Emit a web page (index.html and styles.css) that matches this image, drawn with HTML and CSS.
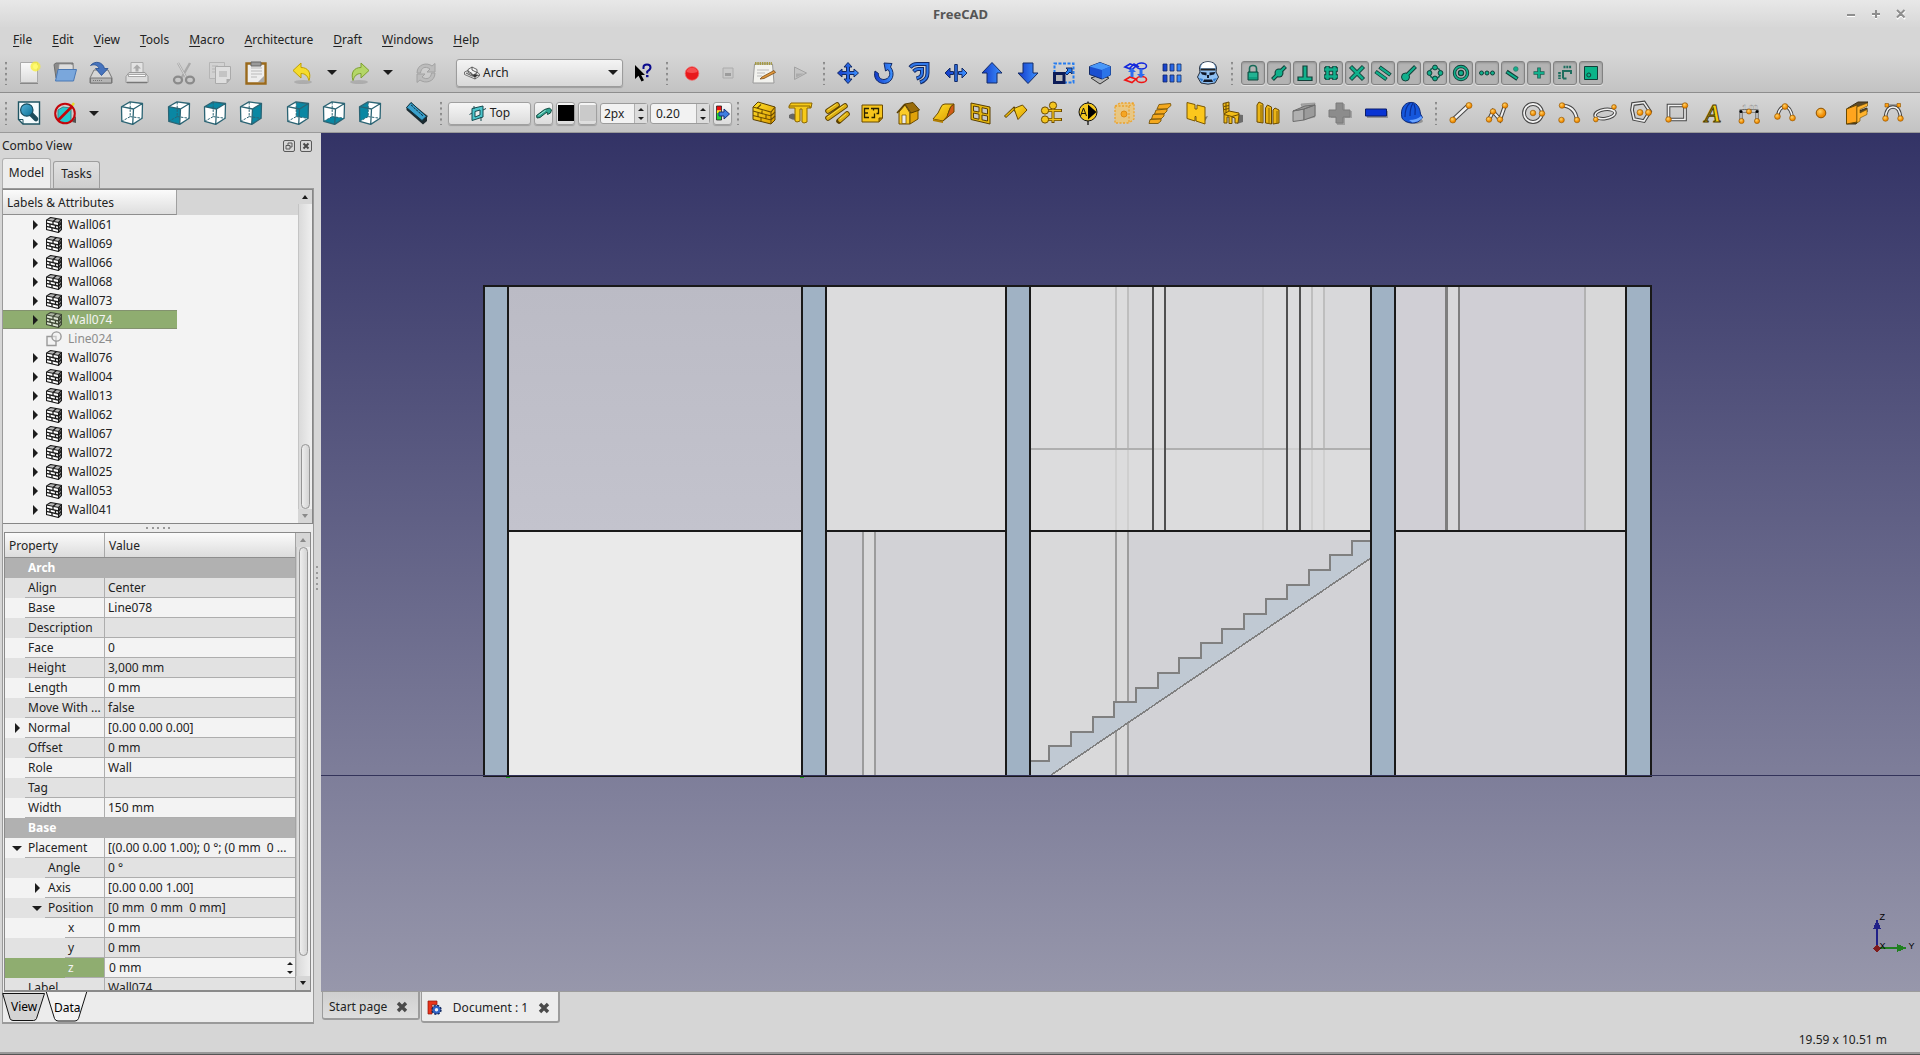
FILE: index.html
```html
<!DOCTYPE html>
<html lang="en">
<head>
<meta charset="utf-8">
<title>FreeCAD</title>
<link rel="stylesheet" href="styles.css">
</head>
<body>
<svg class="defs" width="0" height="0" aria-hidden="true">
  <defs>
    <linearGradient id="gb" x1="0" y1="0" x2="1" y2="0"><stop offset="0" stop-color="#1238c8"/><stop offset="1" stop-color="#3d93ff"/></linearGradient>
    <linearGradient id="gy" x1="0" y1="0" x2="1" y2="1"><stop offset="0" stop-color="#ffe12a"/><stop offset="1" stop-color="#dc9a00"/></linearGradient>
    <linearGradient id="gw" x1="0" y1="0" x2="0" y2="1"><stop offset="0" stop-color="#fafafa"/><stop offset="1" stop-color="#dcdcdc"/></linearGradient>
    <linearGradient id="gt" x1="0" y1="0" x2="1" y2="1"><stop offset="0" stop-color="#57b6dc"/><stop offset="1" stop-color="#0a6d92"/></linearGradient>
    <radialGradient id="go" cx=".4" cy=".35"><stop offset="0" stop-color="#ffd268"/><stop offset="1" stop-color="#f08a00"/></radialGradient>
    <linearGradient id="view" x1="0" y1="0" x2="0" y2="1"><stop offset="0" stop-color="#333366"/><stop offset="1" stop-color="#9797ab"/></linearGradient>
    <linearGradient id="roomA" x1="0" y1="0" x2="0" y2="1"><stop offset="0" stop-color="#bbbbc5"/><stop offset="1" stop-color="#c3c3cd"/></linearGradient>
  </defs>
  <symbol id="cube" viewBox="0 0 24 24">
    <path d="M10.2 1v14.6L1.8 20.3M10.2 15.6l12 1.7" fill="none" stroke="#2b6474" stroke-width="1" stroke-dasharray="2.5 1.2"/>
    <path d="M1.5 5.7 10 .9l12.5 1.6-.4 14.8-9.4 6.1-10.9-3.1zM1.5 5.7l12 2.3 9-5.5M13.5 8l-.8 15.4" fill="none" stroke="#2b6474" stroke-width="1.3" stroke-linejoin="round"/>
  </symbol>
  <symbol id="cubebg" viewBox="0 0 24 24"><path d="M1.5 5.7 10 .9l12.5 1.6-.4 14.8-9.4 6.1-10.9-3.1z" fill="#fff"/></symbol>
  <symbol id="wall" viewBox="0 0 16 16">
    <path d="M.5 3 4.500.5 15.500 2.500v10L12.500 15.500.5 12.500z" fill="#fff"/>
    <path d="M.5 3 4.500.5l11 2-3 3z" fill="#bbb"/>
    <path d="M12.500 5.500l3-3v10l-3 3z" fill="#999"/>
    <path d="M.5 3v9.500l12 3 3-3v-10l-11-2zM.5 3l12 2.500 3-3M12.500 5.500v10" fill="none" stroke="#1a1a1a" stroke-width="1.100"/>
    <path d="M.5 6.200l12 2.800 3-3M.5 9.300l12 2.900 3-3" fill="none" stroke="#1a1a1a" stroke-width="1.300"/>
    <path d="M7 4.400v3.300M4 7v3.300M9.500 8.300v3.300M6 10.700V14M7 4.400l3.500-2.800M14 4.500v3.200" fill="none" stroke="#1a1a1a" stroke-width="1.300"/>
  </symbol>
  <symbol id="close" viewBox="0 0 12 12"><path d="M2 2l8 8M10 2l-8 8" stroke="#4a4a4a" stroke-width="3.4"/></symbol>
</svg>

<div class="app">
  <header class="titlebar">
    <span class="title">FreeCAD</span>
    <svg class="winbtns" width="64" height="14" viewBox="0 0 64 14"><g fill="none" stroke="#fff" stroke-width="2" transform="translate(0 1)"><path d="M2 8h8M27 7h8M31 3v8M52 3l8 8M60 3l-8 8"/></g><g fill="none" stroke="#8e8e8e" stroke-width="2"><path d="M2 8h8M27 7h8M31 3v8M52 3l7.5 7.5M59.500 3l-7.500 7.500"/></g></svg>
  </header>

  <nav class="menubar">
    <span><u>F</u>ile</span><span><u>E</u>dit</span><span><u>V</u>iew</span><span><u>T</u>ools</span><span><u>M</u>acro</span><span><u>A</u>rchitecture</span><span><u>D</u>raft</span><span><u>W</u>indows</span><span><u>H</u>elp</span>
  </nav>

  <div class="toolbar">
    <i class="grip"></i>
    <svg class="ic" viewBox="0 0 24 24"><path d="M3.500 1.500h17v20h-17z" fill="url(#gw)" stroke="#aaa"/><path d="M3 22.500h18" stroke="#888"/><circle cx="18.500" cy="5.500" r="5" fill="#f8ef30" opacity=".75"/><circle cx="18.500" cy="5.500" r="2.500" fill="#fffb70"/></svg>
    <svg class="ic" viewBox="0 0 24 24"><path d="M1 3.500 3 2h17v15H3z" fill="#8c8c8c" stroke="#6e6e6e"/><path d="M6 3h12l2 1v8H5z" fill="#ddd" stroke="#888" stroke-width=".7"/><path d="M5 8.500h18.500l-3 11.500H2.500z" fill="#7aa7dc" stroke="#4a78b4"/></svg>
    <svg class="ic" viewBox="0 0 24 24"><path d="M5 9h14l4 8v5H1v-5z" fill="#d6d6d6" stroke="#777"/><path d="M1.500 17h21v5h-21z" fill="#b4b4b4" stroke="#777"/><path d="M4 19.500h9" stroke="#777" stroke-dasharray="1 1"/><path d="M1.500 4.500C6-1 14 1 15.500 7.500h3.500l-6.500 7-6-7H10C9 4 5 3 1.500 4.500z" fill="#4673bd" stroke="#234d8f" stroke-width=".8"/></svg>
    <svg class="ic" viewBox="0 0 24 24"><path d="M6 1.500h12v12H6z" fill="#e3e3e3" stroke="#aaa"/><path d="M12 3.500l4 4h-2.500v3h-3v-3H8z" fill="#aaa"/><path d="M4 11.500h16l3 4v6H1v-6z" fill="#ddd" stroke="#999"/><path d="M3.500 15.500h17v-2h-17z" fill="#fff" stroke="#888" stroke-width=".7"/><path d="M2 21.500h20" stroke="#777" stroke-width="1.500"/></svg>
    <i class="gap"></i>
    <svg class="ic" viewBox="0 0 24 24"><path d="M6 2l8.500 15M18 2 9.500 17" stroke="#a9a9a9" stroke-width="2.400"/><path d="M6 2l8.500 15" stroke="#d5d5d5"/><ellipse cx="6" cy="19" rx="4" ry="3.400" fill="none" stroke="#8b8b8b" stroke-width="2.300"/><ellipse cx="18" cy="19" rx="4" ry="3.400" fill="none" stroke="#8b8b8b" stroke-width="2.300"/></svg>
    <svg class="ic" viewBox="0 0 24 24"><path d="M1.500 1.500h15v16h-15z" fill="#d2d2d2" stroke="#b5b5b5"/><path d="M4 5h6M4 8h3M4 11h3" stroke="#b5b5b5"/><path d="M7.500 5.500h15V18l-4 4.500h-11z" fill="#dedede" stroke="#aaa"/><path d="M11 10h8v6h-8z" fill="#c4c4c4"/><path d="M22.500 18l-4 4.500V18z" fill="#aaa"/></svg>
    <svg class="ic" viewBox="0 0 24 24"><path d="M2.500 2.500h19v20h-19z" fill="#eee" stroke="#9a6a1c" stroke-width="2.400"/><path d="M7 7h11M7 10h11M7 13h11M7 16h6" stroke="#ccc" stroke-width="1.500"/><path d="M7 1h10v4H7z" fill="#9a9a9a" stroke="#666"/><path d="M20 15v6h-6z" fill="#aaa"/></svg>
    <i class="gap"></i>
    <svg class="ic" viewBox="0 0 24 24"><ellipse cx="12" cy="21" rx="9" ry="2" fill="#0002"/><path d="M10 2v4.500c7 0 10.500 5 8 13-1.500-5-4-7-8-7V17L2 9.500z" fill="#f6dc2c" stroke="#c0a000"/></svg>
    <i class="drop dw1"></i>
    <svg class="ic" viewBox="0 0 24 24"><ellipse cx="11" cy="21" rx="9" ry="2" fill="#0002"/><path d="M13 2v4.500c-7 0-10.500 5-8 13 1.500-5 4-7 8-7V17l8-7.500z" fill="#b4d668" stroke="#7da02e"/></svg>
    <i class="drop dw2"></i>
    <i class="gap"></i>
    <svg class="ic" viewBox="0 0 24 24"><path d="M3 12C3 3 13 1 18 5l3-2.500V11h-8l3-3C11 4.500 7 7 6.500 12zM21 12c0 9-10 11-15 7l-3 2.500V13h8l-3 3c5 3.500 9 1 9.500-4z" fill="#bcbcbc" stroke="#a2a2a2"/></svg>
    <div class="combo"><svg width="16" height="14" viewBox="0 0 16 14"><path d="M.5 6 5 4v2l5-2 5.500 4v2L11 13 .5 8.500z" fill="#e6e6e6" stroke="#555" stroke-width=".8"/><path d="M4 3.500 8 1l5 2.500V7L9 9 4 6.500z" fill="#f5f5f5" stroke="#444" stroke-width=".8"/><path d="M8 1v3l5 2.500M4 5l4 2.500V9M2 7l6 3 3-1.500 4 1M11 10v3" fill="none" stroke="#333" stroke-width=".8"/><path d="M8 10l3-1.500 3 1-3 1.800z" fill="#333"/></svg><span>Arch</span><i class="tri"></i></div>
    <svg class="ic" viewBox="0 0 24 24"><path d="M4 4v14l3.500-3.200 3 5.700 2.500-1.200-2.800-5.300H14z" fill="#000"/><path d="M12.500 8V6q0-2.500 3.500-2.500T19.500 6.500q0 2-3.300 4V12.500" fill="none" stroke="#0a0a8c" stroke-width="2"/><path d="M15 14h2.500v2.200H15z" fill="#0a0a8c"/></svg>
    <i class="grip g13"></i>
    <svg class="ic" viewBox="0 0 24 24"><circle cx="12" cy="12.500" r="6.800" fill="#e8191c" stroke="#f06a6a" stroke-width=".8"/><path d="M6.500 11a5.700 5.700 0 0 1 11 0q-5.500 2-11 0z" fill="#ff6f6f" opacity=".6"/></svg>
    <svg class="ic" viewBox="0 0 24 24"><path d="M7 7h10v10H7z" fill="#c9c9c9" stroke="#acacac"/><path d="M9 12h6v3H9z" fill="#9c9c9c"/></svg>
    <svg class="ic" viewBox="0 0 24 24"><path d="M2.500 3h18l1.500 19H1z" fill="#f2f2ee" stroke="#999"/><path d="M3 2.500h17" stroke="#a59a43" stroke-width="3" stroke-dasharray="1.500 .8"/><path d="M5 9h12M5 12h8M5 15h5" stroke="#bbb"/><path d="M10 16l12-6.500 1.500 2L12 17.500 8 18z" fill="#e0973b" stroke="#7a4d18" stroke-width=".8"/></svg>
    <svg class="ic" viewBox="0 0 24 24"><path d="M6.500 6l12 6-12 6.500z" fill="#c4c4c4" stroke="#a2a2a2"/><path d="M8 12.500h8l-8 4z" fill="#ababab"/></svg>
    <i class="grip"></i>
    <svg class="ic" viewBox="0 0 24 24"><path d="M12 1.500l4 4.500h-2.500v4.500H18V8l4.500 4-4.500 4v-2.500h-4.500V18H16l-4 4.500L8 18h2.500v-4.500H6V16l-4.500-4L6 8v2.500h4.500V6H8z" fill="url(#gb)" stroke="#122a66"/></svg>
    <svg class="ic" viewBox="0 0 24 24"><path d="M3 10l3.500 2.500C6 16 8.500 18.500 12 18.500c5.500-.5 7.500-6 4-10L13.500 10 12 2l8 .5-1.500 3.500C24 13 20 22 12.500 22.500 5.500 22.500 1 17 3 10z" fill="url(#gb)" stroke="#122a66"/></svg>
    <svg class="ic" viewBox="0 0 24 24"><g fill="none" stroke="#122a66" stroke-width="4"><path d="M2 6.500Q5 3 9 3h10.500v9q0 7-7.500 9.500"/><path d="M5.500 10.500Q8 8 10 8h4v4q0 4-5.500 5.500"/></g><g fill="none" stroke="#2f78ea" stroke-width="2"><path d="M2.500 6Q5 3 9 3h10.500v9q0 6.500-7 9.300"/><path d="M6 10Q8 8 10 8h4v4q0 3.500-5 5.300"/></g></svg>
    <svg class="ic" viewBox="0 0 24 24"><path d="M1 12l5-5v3.500h3.500v3H6V17zM23 12l-5-5v3.500h-3.500v3H18V17z" fill="url(#gb)" stroke="#122a66"/><path d="M10.700 3.500h2.600v17h-2.600z" fill="#2f72e8" stroke="#122a66"/></svg>
    <svg class="ic" viewBox="0 0 24 24"><path d="M12 1.500l10 10.500h-5v10H7V12H2z" fill="url(#gb)" stroke="#122a66"/></svg>
    <svg class="ic" viewBox="0 0 24 24"><path d="M12 22.500 2 12h5V2h10v10h5z" fill="url(#gb)" stroke="#122a66"/></svg>
    <svg class="ic" viewBox="0 0 24 24"><path d="M2.500 12V2.500h19v19H12" fill="none" stroke="#257cf0" stroke-width="2" stroke-dasharray="3 1.500"/><path d="M2.500 12.500h9.500v9H2.500z" fill="#b7b7b7" stroke="#0c1c58" stroke-width="3"/><path d="M13 12l3-3-2-2h6v6l-2-2-3 3z" fill="#257cf0" stroke="#122a66"/></svg>
    <svg class="ic" viewBox="0 0 24 24"><path d="M3 17l9-3 9 3-9 6z" fill="#b8b8b8" stroke="#333"/><path d="M1.500 5.500 12 1.500l10.500 4v8.500L14 18 1.500 13.500z" fill="#1a4fd0" stroke="#122a66"/><path d="M1.500 5.500 12 1.500l10.500 4L14 9z" fill="#4a98f8"/><path d="M14 9l8.500-3.500V14L14 18z" fill="#2b74e8"/></svg>
    <svg class="ic" viewBox="0 0 24 24"><g fill="none" stroke-width="1.600"><path d="M1 6l5-3 6 2-4 3.500z" stroke="#1428dc"/><ellipse cx="17.500" cy="5" rx="5" ry="3" stroke="#1428dc"/><path d="M5 8l5-5 5 3" stroke="#1428dc"/><path d="M1 19l5-3 6 2-4 3.500z" stroke="#f01414"/><ellipse cx="17.500" cy="18.500" rx="5" ry="3" stroke="#f01414"/></g><path d="M8 7l4 4h-2.500v5h-3v-5H4zM17 17l-4-4h2.500V8h3v5H21z" fill="#2b6cf0"/></svg>
    <svg class="ic" viewBox="0 0 24 24"><g fill="url(#gb)" stroke="#122a66" stroke-width=".8"><path d="M3 3h4v7H3zM10 3h4v7h-4zM17 3h4v7h-4zM3 14h4v7H3zM10 14h4v7h-4zM17 14h4v7h-4z"/></g></svg>
    <svg class="ic" viewBox="0 0 24 24"><path d="M4 11C2 3 7 .8 12 .8S22 3 20 11l2.500 5-3.500 6-7 1.200-7-1.200-3.500-6z" fill="#8fc0f2" stroke="#222b3a"/><path d="M5 7q0-6 7-6t7 6z" fill="#fff"/><path d="M4.500 7.500h15v2h-15z" fill="#222"/><path d="M4.500 11l6 .5v3l-4.500-1zM19.500 11l-6 .5v3l4.500-1zM8 18.500h8l1 2.500H7zM11 14h2v3h-2z" fill="#10182a"/><path d="M3 17l4 1-1 3zM21 17l-4 1 1 3z" fill="#2f7ad0"/></svg>
    <i class="grip g8"></i>
    <div class="snaps">
      <b><svg viewBox="0 0 24 24"><path d="M8.500 11V7.500q0-3 3.500-3t3.500 3V11" fill="none" stroke="#176a58" stroke-width="1.600"/><path d="M7 11h10v8H7z" fill="#0f9f80" stroke="#12463c"/><path d="M8 13h8M8 15h8" stroke="#3fd0ae" stroke-width=".8"/></svg></b>
      <b><svg viewBox="0 0 24 24"><path d="M5.500 18.500 18.500 5.500" stroke="#123f38" stroke-width="4"/><circle cx="12" cy="12" r="4.500" fill="#123f38"/><circle cx="12" cy="12" r="3.400" fill="#11b08c"/><path d="M6 18 18 6" stroke="#11b08c" stroke-width="2"/></svg></b>
      <b><svg viewBox="0 0 24 24"><path d="M10 5h4v11h5v3.500H5V16h5z" fill="#11b08c" stroke="#123f38" stroke-width="1.200"/></svg></b>
      <b><svg viewBox="0 0 24 24"><path d="M5 8.500h14M5 15.500h14M8.500 5v14M15.500 5v14" stroke="#123f38" stroke-width="4.500"/><path d="M5.500 8.500h13M5.500 15.500h13M8.500 5.500v13M15.500 5.500v13" stroke="#11b08c" stroke-width="2.600"/></svg></b>
      <b><svg viewBox="0 0 24 24"><path d="M5.500 5.500l13 13M18.500 5.500l-13 13" stroke="#123f38" stroke-width="4.400"/><path d="M6 6l12 12M18 6 6 18" stroke="#11b08c" stroke-width="2.500"/></svg></b>
      <b><svg viewBox="0 0 24 24"><path d="M8.500 6 19.500 14M4.500 10.500l11 8" stroke="#123f38" stroke-width="4"/><path d="M9 6.500 19 13.600M5 11l10 7" stroke="#11b08c" stroke-width="2.200"/></svg></b>
      <b><svg viewBox="0 0 24 24"><path d="M18.500 5.500 8 16" stroke="#123f38" stroke-width="4"/><circle cx="8.500" cy="16" r="4" fill="#11b08c" stroke="#123f38"/><path d="M18 6 8.500 15.500" stroke="#11b08c" stroke-width="2.200"/></svg></b>
      <b><svg viewBox="0 0 24 24"><circle cx="12" cy="12" r="5.500" fill="none" stroke="#176a58" stroke-width="1.600"/><g fill="#11b08c" stroke="#123f38"><circle cx="12" cy="6.500" r="2.400"/><circle cx="12" cy="17.500" r="2.400"/><circle cx="6.500" cy="12" r="2.400"/><circle cx="17.500" cy="12" r="2.400"/></g></svg></b>
      <b><svg viewBox="0 0 24 24"><circle cx="12" cy="12" r="6.500" fill="none" stroke="#123f38" stroke-width="3.400"/><circle cx="12" cy="12" r="6.500" fill="none" stroke="#11b08c" stroke-width="1.600"/><circle cx="12" cy="12" r="2.600" fill="#11b08c" stroke="#123f38" stroke-width="1.200"/></svg></b>
      <b><svg viewBox="0 0 24 24"><g fill="#11b08c" stroke="#123f38"><circle cx="6.500" cy="12" r="2"/><circle cx="12" cy="12" r="2"/><circle cx="17.500" cy="12" r="2"/></g></svg></b>
      <b><svg viewBox="0 0 24 24"><path d="M5.500 10.500l11 7.500" stroke="#123f38" stroke-width="4"/><path d="M6 11l10 6.600" stroke="#11b08c" stroke-width="2"/><circle cx="14.800" cy="8" r="2.300" fill="#11b08c" stroke="#2a7a6a" stroke-width=".8"/></svg></b>
      <b><svg viewBox="0 0 24 24"><path d="M12 6.500v11M6.500 12h11" stroke="#1d6254" stroke-width="3.600"/><path d="M12 7.200v9.600M7.200 12h9.600" stroke="#11b08c" stroke-width="1.800"/></svg></b>
      <b><svg viewBox="0 0 24 24"><path d="M10 17.500V10h8v3M10 17.500h3.500" fill="none" stroke="#1f6e5f" stroke-width="2"/><path d="M10.500 6h8" stroke="#1f6e5f" stroke-width="2.600" stroke-dasharray="2 .8"/><path d="M6.500 11v7" stroke="#1f6e5f" stroke-width="2.600" stroke-dasharray="2 .8"/></svg></b>
      <b><svg viewBox="0 0 24 24"><path d="M5.500 5.500h13v13h-13z" fill="#0bb489" stroke="#123f38"/><circle cx="9.800" cy="14" r="2" fill="none" stroke="#123f38"/></svg></b>
    </div>
  </div>

  <div class="toolbar second">
    <i class="grip"></i>
    <svg class="ic" viewBox="0 0 24 24"><path d="M1.500 1h21v22H6l-4.500-4.500z" fill="#f4fbfd" stroke="#1f5563" stroke-width="1.400"/><path d="M14 13l5 5" stroke="#1d4d5c" stroke-width="4.600" stroke-linecap="round"/><circle cx="9.800" cy="9" r="6.200" fill="url(#gt)" stroke="#184e60" stroke-width="1.200"/><path d="M1.500 18.500H6V23" fill="none" stroke="#1f5563"/></svg>
    <svg class="ic" viewBox="0 0 24 24"><path d="M5 9l5-3 8 1v12l-4 3-9-2z" fill="#25c9cf" stroke="#3f8286"/><path d="M16 9l5-7" stroke="#e5dc2c" stroke-width="2.400"/><path d="M19 21l4-6v7z" fill="#0009"/><circle cx="12" cy="12.500" r="9.800" fill="none" stroke="#c3060b" stroke-width="2"/><path d="M5 19.500 19 5.500" stroke="#c3060b" stroke-width="2.600"/></svg>
    <i class="drop dw1"></i>
    <i class="sp10"></i>
    <svg class="ic" viewBox="0 0 24 24"><use href="#cubebg"/><use href="#cube"/></svg>
    <i class="gap"></i>
    <svg class="ic" viewBox="0 0 24 24"><use href="#cubebg"/><path d="M1.500 5.700l12 2.300-.8 15.400-10.900-3.100z" fill="#0a87a3"/><use href="#cube"/></svg>
    <svg class="ic" viewBox="0 0 24 24"><use href="#cubebg"/><path d="M1.500 5.700 10 .9l12.500 1.600-9 5.500z" fill="#0a87a3"/><use href="#cube"/></svg>
    <svg class="ic" viewBox="0 0 24 24"><use href="#cubebg"/><path d="M13.500 8l9-5.500-.4 14.800-9.400 6.100z" fill="#0a87a3"/><use href="#cube"/></svg>
    <i class="gap"></i>
    <svg class="ic" viewBox="0 0 24 24"><use href="#cubebg"/><path d="M10.200 1l12.300 1.500-.4 14.800-11.900-1.700z" fill="#0a87a3"/><use href="#cube"/></svg>
    <svg class="ic" viewBox="0 0 24 24"><use href="#cubebg"/><path d="M1.800 20.300l8.400-4.700 11.900 1.700-9.400 6.100z" fill="#0a87a3"/><use href="#cube"/></svg>
    <svg class="ic" viewBox="0 0 24 24"><use href="#cubebg"/><path d="M1.500 5.700 10.200 1v14.600l-8.400 4.700z" fill="#0a87a3"/><use href="#cube"/></svg>
    <i class="gap"></i>
    <svg class="ic" viewBox="0 0 24 24"><path d="M4 9l3-6L23 15l-5 8z" fill="#222" opacity=".7"/><path d="M1.500 6.500 6 1.500l16 14v4.500l-4 3.500L1.500 9z" fill="#1c2a30"/><path d="M1.500 6.500 6 1.500l15.500 13.800-4.500 4.200z" fill="#3aa0cc" stroke="#123542"/><path d="M6 4l2 1.500M8.500 6.500l2 1.500M11 8.700l2 1.500M13.500 11l2 1.500M16 13.200l2 1.500" stroke="#123542"/></svg>
    <i class="grip g14"></i>
    <div class="btn top"><svg width="18" height="18" viewBox="0 0 18 18"><path d="M3 4.500 14 2v11L3 16.500z" fill="#4cc5cc" stroke="#14494e"/><path d="M6 7.500 11 6v5l-5 2z" fill="#eee" stroke="#14494e"/><path d="M.5 10.500 3 9M14 6l3-1.500M5 2v3M12 13v4" stroke="#14494e"/></svg><span>Top</span></div>
    <div class="btn b19 m3"><svg width="17" height="14" viewBox="0 0 17 14"><path d="M1.500 9.500 9.500 3.500l5-1.500 2 2-1 3-3 1.500-.5-2.500L5 11.500l-3 .5z" fill="#2fa491" stroke="#124a41"/><path d="M3.500 9.500l7-5" stroke="#a9e8dc"/></svg></div>
    <div class="btn b19 m3"><i class="sw black"></i></div>
    <div class="btn b19 m3"><i class="sw grey"></i></div>
    <div class="spin s1"><span>2px</span><em><i class="up"></i><i class="dn"></i></em></div>
    <div class="spin s2"><span>0.20</span><em><i class="up"></i><i class="dn"></i></em></div>
    <div class="btn b19 m3"><svg width="15" height="16" viewBox="0 0 15 16"><path d="M1.500 1h5v4.500h-5z" fill="#f00d0d"/><path d="M1.500 5.500h5V8h-5z" fill="#ffe600"/><path d="M1.500 8h5v7h-5z" fill="#22d33a"/><path d="M1.500 1h5v14h-5z" fill="none" stroke="#222" stroke-width=".8"/><path d="M4 7h5V4l5.500 5L9 14v-3H4z" fill="#3e7ee0" stroke="#14327a"/></svg></div>
    <i class="grip g14"></i>
    <svg class="ic" viewBox="0 0 24 24"><path d="M1 6 6 1l17 5v13l-4 4L1 18.500z" fill="url(#gy)" stroke="#5a3f00"/><path d="M1 6l18 5 4-5M1 10l18 5 4-4M1 14.500l18 4.500 4-4M19 11v12M9 3.500l-4 4M10 8.500v4M6 12v4M14 14v4M9 17v4" fill="none" stroke="#6d4d00" stroke-width="1.100"/></svg>
    <svg class="ic" viewBox="0 0 24 24"><path d="M1 14q4-3 7 0v5q-4 0-7-2z" fill="#666"/><path d="M1 5l2-3h21l-1 5h-4v14l-3 1-2-1V8h-2v12l-3 1-2-1V7H1z" fill="#f6ca1a" stroke="#8a6500"/><path d="M1 5h21v2" fill="none" stroke="#8a6500"/></svg>
    <svg class="ic" viewBox="0 0 24 24"><g stroke-linecap="round"><path d="M4 10 13 4M4 17 21 5M15 20l8-7" stroke="#5a3f00" stroke-width="5.600"/><path d="M4 10 13 4M4 17 21 5M16 19l7-6" stroke="#dcae12" stroke-width="3.800"/><path d="M4 9 12 3.500M4 16 20 4.500M16 18l6-5" stroke="#f7dd4c" stroke-width="1"/></g></svg>
    <svg class="ic" viewBox="0 0 24 24"><path d="M2 4h20.500v13l-3.500 4H2z" fill="#f6c51c" stroke="#6b4a00"/><path d="M22.500 17H19v4" fill="#a87800" stroke="#6b4a00"/><path d="M9 7.500H4.500v9H9M4.500 12H8M11 7.500h7.500v5h-2M13.500 7.500v2M11.500 16.500h3v-4" fill="none" stroke="#2b2200" stroke-width="1.300"/></svg>
    <svg class="ic" viewBox="0 0 24 24"><path d="M3 11 9 4l5 8v11H3z" fill="#f9cb29" stroke="#6b4a00"/><path d="M14 12l8-3v9l-8 5z" fill="#e0a20a" stroke="#6b4a00"/><path d="M9 3l8-1.500L23.500 9 15 12z" fill="#9a6c0a" stroke="#5a3f00"/><path d="M9 3 1 12" stroke="#5a3f00" stroke-width="1.500"/><path d="M6 14h4v8.500H6z" fill="#ececec" stroke="#6b4a00" stroke-width=".7"/></svg>
    <svg class="ic" viewBox="0 0 24 24"><path d="M1 18Q7 12 9 6q1-3 4-3h9q-4 2-5 7-1 7-6 10z" fill="url(#gy)" stroke="#6b4a00"/><path d="M22 3v8l-11 9q5-4 6-10 1-5 5-7z" fill="#d25a16" stroke="#6b4a00"/><path d="M1 18v2l10 2v-2z" fill="#b07c00"/></svg>
    <svg class="ic" viewBox="0 0 24 24"><path d="M3 2l19 4v17L3 18.500z" fill="#e8b90e" stroke="#5a3f00"/><path d="M5.500 5 11 6v5L5.500 10zM14 6.700l5.500 1.200V13L14 11.800zM5.500 12l5.500 1.200v5L5.500 17zM14 14l5.500 1v5L14 18.800z" fill="#c6c6c6" stroke="#5a3f00"/></svg>
    <svg class="ic" viewBox="0 0 24 24"><path d="M1 16l9-8.500 3 3.500" fill="none" stroke="#5a3f00" stroke-width="3"/><path d="M1.500 15.500 10 7.500" fill="none" stroke="#e8b80e" stroke-width="1.600"/><path d="M10 7.500 18.500 4l4.500 5-9 9.500z" fill="url(#gy)" stroke="#6b4a00"/></svg>
    <svg class="ic" viewBox="0 0 24 24"><path d="M13 6v16M7 9.500h15M7 18.500h15" stroke="#6b4a00" stroke-width="3"/><path d="M13 6v15M7 9.500h14M7 18.500h14" stroke="#f0bf1a" stroke-width="1.400"/><g fill="#f4c51e" stroke="#6b4a00"><circle cx="13" cy="4.500" r="3.600"/><circle cx="5" cy="9.500" r="3.600"/><circle cx="5" cy="18.500" r="3.600"/></g></svg>
    <svg class="ic" viewBox="0 0 24 24"><path d="M12 .5V24" stroke="#000" stroke-width="1.200"/><circle cx="12" cy="11" r="9" fill="#f4c71e" stroke="#111"/><path d="M12 3.500l8.500 7.500-8.500 7.500z" fill="#000"/><path d="M4.500 15 7.500 7l3 8M5.500 12.500h4" fill="none" stroke="#111"/></svg>
    <svg class="ic" viewBox="0 0 24 24"><path d="M3 5l5-3h14v16l-5 4H3z" fill="#f3c565" opacity=".7"/><path d="M3 5h14v17H3zM3 5l5-3h14v16l-5 4M17 5l5-3" fill="none" stroke="#eda32c" stroke-dasharray="2 1.500" stroke-width="1.300"/><circle cx="12" cy="13" r="3" fill="#f5a623" stroke="#e08a10"/></svg>
    <svg class="ic" viewBox="0 0 24 24"><g fill="#f4a81e" stroke="#6b4a00" stroke-width=".8"><path d="M11 3.500 22.500 2.500 23 4.500 19 8H9z"/><path d="M8 9l11-1v2l-3 3H6.500z"/><path d="M5 13.500l11-.5v2l-3 3H3.500z"/><path d="M2 18.500l11-.5v2l-3 2.500H1z"/></g></svg>
    <svg class="ic" viewBox="0 0 24 24"><path d="M14 18l10-3-4 7z" fill="#555" opacity=".7"/><path d="M3 1.500l8 2v4.500h2V4l8 2v17L12 20v-4.500h-1V20l-8-2.500z" fill="#fcc71c" stroke="#7b5600"/></svg>
    <svg class="ic" viewBox="0 0 24 24"><path d="M15 13l8 1v7l-6 2z" fill="#444" opacity=".7"/><path d="M3 2.500 9 1v9l10 2v2l-1 8h-3v-5l-3-1v6.500H9V16l-2 0v6H4v-9z" fill="#f2bd18" stroke="#6b4a00"/><path d="M6 2v10M4 5.500l5-1M4 8.500l5-1M4 13.500l8 2 7-2M9 10l-5 3" fill="none" stroke="#6b4a00"/></svg>
    <svg class="ic" viewBox="0 0 24 24"><g fill="#eab517" stroke="#6b4a00"><path d="M1 4l2-3 4 2v19l-6-1zM9.500 7l2-3 4 2v17l-6-1zM17 9l2-2 4 2v13l-6 1z"/></g><path d="M5 4v18M13 7v16M21 10v12" stroke="#8a6500"/></svg>
    <svg class="ic" viewBox="0 0 24 24"><path d="M9 3l14-1v14l-9 2z" fill="#a5a5a5" stroke="#8f8f8f" stroke-width=".7"/><path d="M1 10l11-2v11L1 20.500z" fill="#b0b0b0" stroke="#6c6c6c"/><path d="M1 10 13 5l10-1-11 4zM12 8l11-4v11l-11 4z" fill="#9b9b9b" stroke="#6c6c6c"/></svg>
    <svg class="ic" viewBox="0 0 24 24"><path d="M9 3h8v7h7v7h-7v7H9v-7H3v-7h6z" fill="#0003"/><path d="M8 2h7v7h7v7h-7v6H8v-6H1V9h7z" fill="#8c8c8c" stroke="#7a7a7a"/></svg>
    <svg class="ic" viewBox="0 0 24 24"><path d="M3 10h21v7H3z" fill="#0004"/><path d="M1.500 8h21v7h-21z" fill="#0a35d4" stroke="#0b1d6b"/></svg>
    <svg class="ic" viewBox="0 0 24 24"><ellipse cx="14" cy="20" rx="9" ry="3" fill="#0004"/><path d="M2 17C0 8 4 2 10 1.500 16 .5 20 6 20.500 13l2 3.500q-4 6-11 5.500Q4 21 2 17z" fill="#1557dc" stroke="#0c2a7a"/><path d="M5 16Q5 6 10 2M10 15Q10 7 13 2M15 14q1-6-1-11" fill="none" stroke="#0a2f96" stroke-width="1.200"/><path d="M9 19q8 0 12-4l1.500 2q-4 4-10 4.500z" fill="#6aa4ff"/></svg>
    <i class="grip g13"></i>
    <svg class="ic" viewBox="0 0 24 24"><path d="M4 19 20 4" stroke="#444" stroke-width="4.600"/><path d="M4 19 20 4" stroke="#f2f2f2" stroke-width="2.600"/><g fill="url(#go)" stroke="#8d5200" stroke-width=".6"><circle cx="3.800" cy="19" r="3"/><circle cx="20" cy="4.500" r="3"/></g></svg>
    <svg class="ic" viewBox="0 0 24 24"><path d="M4 18.500 8 10.500l7 8 5-14" fill="none" stroke="#444" stroke-width="4"/><path d="M4 18.500 8 10.500l7 8 5-14" fill="none" stroke="#f2f2f2" stroke-width="2"/><g fill="url(#go)" stroke="#8d5200" stroke-width=".6"><circle cx="4" cy="18.500" r="2.800"/><circle cx="8" cy="10.500" r="2.800"/><circle cx="15" cy="18.500" r="2.800"/><circle cx="20" cy="4.500" r="2.800"/></g></svg>
    <svg class="ic" viewBox="0 0 24 24"><circle cx="12" cy="12" r="9" fill="none" stroke="#444" stroke-width="3.800"/><circle cx="12" cy="12" r="9" fill="none" stroke="#f2f2f2" stroke-width="1.800"/><g fill="url(#go)" stroke="#8d5200" stroke-width=".6"><circle cx="12" cy="12" r="2.800"/><circle cx="21" cy="12.500" r="2.800"/></g></svg>
    <svg class="ic" viewBox="0 0 24 24"><path d="M5 4.500Q18 5 20 19" fill="none" stroke="#444" stroke-width="4"/><path d="M5 4.500Q18 5 20 19" fill="none" stroke="#f2f2f2" stroke-width="2"/><g fill="url(#go)" stroke="#8d5200" stroke-width=".6"><circle cx="5" cy="4.500" r="2.800"/><circle cx="4.500" cy="19" r="2.800"/><circle cx="20" cy="19" r="2.800"/></g></svg>
    <svg class="ic" viewBox="0 0 24 24"><ellipse cx="12" cy="13" rx="10" ry="4.500" transform="rotate(-8 12 13)" fill="none" stroke="#444" stroke-width="3.600"/><ellipse cx="12" cy="13" rx="10" ry="4.500" transform="rotate(-8 12 13)" fill="none" stroke="#f2f2f2" stroke-width="1.600"/><g fill="url(#go)" stroke="#8d5200" stroke-width=".6"><circle cx="2.800" cy="18.500" r="2.400"/><circle cx="21" cy="6" r="2.400"/></g></svg>
    <svg class="ic" viewBox="0 0 24 24"><path d="M3 9 4 3l11-1.500 6 9L15 20 5 18z" fill="none" stroke="#444" stroke-width="3.800"/><path d="M3 9 4 3l11-1.500 6 9L15 20 5 18z" fill="none" stroke="#eee" stroke-width="1.600"/><g fill="url(#go)" stroke="#8d5200" stroke-width=".6"><circle cx="11" cy="11.500" r="3"/><circle cx="19.500" cy="11.500" r="3"/></g></svg>
    <svg class="ic" viewBox="0 0 24 24"><path d="M3.500 4.500h16.500v14H3.500z" fill="none" stroke="#444" stroke-width="3.600"/><path d="M3.500 4.500h16.500v14H3.500z" fill="none" stroke="#f2f2f2" stroke-width="1.600"/><g fill="url(#go)" stroke="#8d5200" stroke-width=".6"><circle cx="3.500" cy="18.500" r="2.800"/><circle cx="20" cy="4.500" r="2.800"/></g></svg>
    <svg class="ic" viewBox="0 0 24 24"><text x="12" y="20.500" text-anchor="middle" class="bigA">A</text></svg>
    <svg class="ic" viewBox="0 0 24 24"><text x="13" y="8.500" text-anchor="middle" class="dim">1.00</text><path d="M4 19v-9h16v9" fill="none" stroke="#444" stroke-width="3"/><path d="M4 19v-9h16v9" fill="none" stroke="#f2f2f2" stroke-width="1.300"/><circle cx="4" cy="10.500" r="1.500"/><circle cx="20" cy="10.500" r="1.500"/><g fill="url(#go)" stroke="#8d5200" stroke-width=".6"><circle cx="12" cy="10.500" r="2.600"/><circle cx="4.500" cy="20" r="2.600"/><circle cx="20" cy="20" r="2.600"/></g></svg>
    <svg class="ic" viewBox="0 0 24 24"><path d="M4.500 15.500Q6 6 12 5.500 18 6 19.500 17" fill="none" stroke="#444" stroke-width="3.400"/><path d="M4.500 15.500Q6 6 12 5.500 18 6 19.500 17" fill="none" stroke="#f2f2f2" stroke-width="1.600"/><g fill="url(#go)" stroke="#8d5200" stroke-width=".6"><circle cx="4.500" cy="15.500" r="2.900"/><circle cx="12" cy="5.500" r="2.900"/><circle cx="19.500" cy="17" r="2.900"/></g></svg>
    <svg class="ic" viewBox="0 0 24 24"><circle cx="12" cy="12" r="4.800" fill="url(#go)" stroke="#8d5200"/></svg>
    <svg class="ic" viewBox="0 0 24 24"><path d="M1.500 8 13 1h10l-5 4-4 2v3l8-3v4l-8 4v4l-3 4H1.500z" fill="#5c4a2a" stroke="#3a2e18"/><path d="M1.500 8 12 4v17l-10.500 2z" fill="#ffa51e" stroke="#6b4a00"/><path d="M12 6l10.500-4v3L15 8.500V12l7-3.500v5L15 17v3l-3 2z" fill="#ffb32e" stroke="#6b4a00" stroke-width=".6"/></svg>
    <svg class="ic" viewBox="0 0 24 24"><path d="M5 4h14" stroke="#666"/><path d="M4.500 17Q5 6 12 6T19.500 17" fill="none" stroke="#444" stroke-width="3.600"/><path d="M4.500 17Q5 6 12 6T19.500 17" fill="none" stroke="#f2f2f2" stroke-width="1.600"/><path d="M4 2.500h3.500V6H4zM16 2.500h3.500V6H16z" fill="#ffa012" stroke="#8d5200" stroke-width=".6"/><g fill="url(#go)" stroke="#8d5200" stroke-width=".6"><circle cx="4.500" cy="17.500" r="2.800"/><circle cx="19.500" cy="17.500" r="2.800"/></g></svg>
  </div>

  <main class="main">
    <aside class="dock">
      <div class="docktitle"><span>Combo View</span>
        <svg width="30" height="12" viewBox="0 0 30 12"><g fill="none" stroke="#5a5a5a"><rect x=".5" y=".5" width="11" height="11" rx="1.500"/><rect x="17.500" y=".5" width="11" height="11" rx="1.500"/><path d="M5 5V3h4v4H7M3 5.500h4V9H3z"/></g><path d="M20.500 3.500l5 5M25.500 3.500l-5 5" stroke="#4a4a4a" stroke-width="2"/></svg>
      </div>
      <div class="tabs"><span class="tab on">Model</span><span class="tab">Tasks</span></div>
      <div class="frame">
        <section class="tree">
          <div class="treebody">
            <div class="thead"><span>Labels &amp; Attributes</span></div>
            <div class="trow"><i class="arr"></i><svg><use href="#wall"/></svg>Wall061</div>
            <div class="trow"><i class="arr"></i><svg><use href="#wall"/></svg>Wall069</div>
            <div class="trow"><i class="arr"></i><svg><use href="#wall"/></svg>Wall066</div>
            <div class="trow"><i class="arr"></i><svg><use href="#wall"/></svg>Wall068</div>
            <div class="trow"><i class="arr"></i><svg><use href="#wall"/></svg>Wall073</div>
            <div class="trow sel"><i class="arr"></i><svg><use href="#wall"/></svg>Wall074</div>
            <div class="trow dim2"><i class="arr none"></i><svg viewBox="0 0 16 16"><path d="M1 5.500h9v9H1z" fill="none" stroke="#999" stroke-width="1.400"/><circle cx="10.500" cy="5.500" r="4.600" fill="#f3f3f3" fill-opacity=".5" stroke="#999" stroke-width="1.400"/></svg>Line024</div>
            <div class="trow"><i class="arr"></i><svg><use href="#wall"/></svg>Wall076</div>
            <div class="trow"><i class="arr"></i><svg><use href="#wall"/></svg>Wall004</div>
            <div class="trow"><i class="arr"></i><svg><use href="#wall"/></svg>Wall013</div>
            <div class="trow"><i class="arr"></i><svg><use href="#wall"/></svg>Wall062</div>
            <div class="trow"><i class="arr"></i><svg><use href="#wall"/></svg>Wall067</div>
            <div class="trow"><i class="arr"></i><svg><use href="#wall"/></svg>Wall072</div>
            <div class="trow"><i class="arr"></i><svg><use href="#wall"/></svg>Wall025</div>
            <div class="trow"><i class="arr"></i><svg><use href="#wall"/></svg>Wall053</div>
            <div class="trow"><i class="arr"></i><svg><use href="#wall"/></svg>Wall041</div>
          </div>
          <div class="sbar"><i class="sb up"></i><div class="track low"><i class="thumb"></i></div><i class="sb dn off"></i></div>
        </section>
        <div class="hsplit"><i></i><i></i><i></i><i></i><i></i></div>
        <section class="props">
          <div class="pbody">
            <div class="phead"><span>Property</span><span>Value</span></div>
            <div class="group">Arch</div>
            <div class="prow odd"><i class="ex"></i><span class="n">Align</span><span class="v">Center</span></div>
            <div class="prow"><i class="ex"></i><span class="n">Base</span><span class="v">Line078</span></div>
            <div class="prow odd"><i class="ex"></i><span class="n">Description</span><span class="v"></span></div>
            <div class="prow"><i class="ex"></i><span class="n">Face</span><span class="v">0</span></div>
            <div class="prow odd"><i class="ex"></i><span class="n">Height</span><span class="v">3,000 mm</span></div>
            <div class="prow"><i class="ex"></i><span class="n">Length</span><span class="v">0 mm</span></div>
            <div class="prow odd"><i class="ex"></i><span class="n">Move With ...</span><span class="v">false</span></div>
            <div class="prow"><i class="ex"><i class="arr"></i></i><span class="n">Normal</span><span class="v">[0.00 0.00 0.00]</span></div>
            <div class="prow odd"><i class="ex"></i><span class="n">Offset</span><span class="v">0 mm</span></div>
            <div class="prow"><i class="ex"></i><span class="n">Role</span><span class="v">Wall</span></div>
            <div class="prow odd"><i class="ex"></i><span class="n">Tag</span><span class="v"></span></div>
            <div class="prow"><i class="ex"></i><span class="n">Width</span><span class="v">150 mm</span></div>
            <div class="group">Base</div>
            <div class="prow"><i class="ex"><i class="tri"></i></i><span class="n">Placement</span><span class="v">[(0.00 0.00 1.00); 0 °; (0 mm&nbsp; 0 ...</span></div>
            <div class="prow odd"><i class="ex l1"></i><span class="n">Angle</span><span class="v">0 °</span></div>
            <div class="prow"><i class="ex l1"><i class="arr"></i></i><span class="n">Axis</span><span class="v">[0.00 0.00 1.00]</span></div>
            <div class="prow odd"><i class="ex l1"><i class="tri"></i></i><span class="n">Position</span><span class="v">[0 mm&nbsp; 0 mm&nbsp; 0 mm]</span></div>
            <div class="prow"><i class="ex l2"></i><span class="n">x</span><span class="v">0 mm</span></div>
            <div class="prow odd"><i class="ex l2"></i><span class="n">y</span><span class="v">0 mm</span></div>
            <div class="prow zsel"><i class="ex l2"></i><span class="n">z</span><span class="v">0 mm<em><i class="up"></i><i class="dn"></i></em></span></div>
            <div class="prow odd"><i class="ex"></i><span class="n">Label</span><span class="v">Wall074</span></div>
          </div>
          <div class="sbar narrow"><i class="sb up off"></i><div class="track high"><i class="thumb"></i></div><i class="sb dn"></i></div>
        </section>
        <div class="btabs">
          <svg width="90" height="30" viewBox="2 992 90 30"><path d="M2.700 993.500 10 1018.500q.8 2 3 2h20.500q2.200 0 3-2L44.500 993.500z" fill="#d4d4d4" stroke="#111"/><path d="M46 991 54.500 1018.500q1 2.500 3.500 2.500h17q2.500 0 3.500-2.500L87 991z" fill="#f3f3f3" stroke="#111"/><text x="11" y="1010.500">View</text><text x="54" y="1011.500">Data</text></svg>
        </div>
      </div>
    </aside>
    <div class="vsplit"><i></i><i></i><i></i><i></i><i></i></div>

    <div class="mdi">
      <svg class="scene" width="1599" height="858" viewBox="321 133 1599 858" shape-rendering="crispEdges">
        <rect x="321" y="133" width="1599" height="858" fill="url(#view)"/>
        <rect x="484" y="286" width="1167" height="491" fill="#dcdcdd"/>
        <rect x="508" y="287" width="294" height="243" fill="url(#roomA)"/>
        <rect x="508" y="532" width="294" height="243" fill="#eaeaea"/>
        <rect x="826" y="532" width="180" height="243" fill="#d2d2d6"/>
        <rect x="864" y="532" width="10" height="243" fill="#dadadb"/>
        <rect x="1128" y="287" width="24" height="162" fill="#d8d8da"/>
        <rect x="1166" y="287" width="97" height="162" fill="#d8d8da"/>
        <rect x="1325" y="287" width="46" height="162" fill="#d8d8da"/>
        <rect x="1030" y="532" width="98" height="243" fill="#d9d9da"/>
        <rect x="1128" y="532" width="243" height="243" fill="#d2d2d6"/>
        <rect x="1395" y="287" width="190" height="243" fill="#d0cfd5"/>
        <rect x="1447" y="287" width="12" height="243" fill="#d8d8da"/>
        <rect x="1585" y="287" width="41" height="243" fill="#d8d8d9"/>
        <rect x="1395" y="532" width="231" height="243" fill="#d2d2d6"/>
        <g fill="#9c9c9c">
          <rect x="862" y="532" width="2" height="243"/><rect x="874" y="532" width="2" height="243"/>
          <rect x="1115" y="532" width="2" height="243"/><rect x="1127" y="532" width="2" height="243"/>
        </g>
        <g fill="#bebebe">
          <rect x="1115" y="287" width="2" height="162"/><rect x="1127" y="287" width="2" height="162"/>
          <rect x="1311" y="287" width="2" height="162"/><rect x="1323" y="287" width="2" height="162"/>
        </g>
        <rect x="1262" y="287" width="2" height="162" fill="#cacaca"/>
        <g fill="#cfcfcf">
          <rect x="1115" y="450" width="2" height="80"/><rect x="1127" y="450" width="2" height="80"/>
          <rect x="1262" y="450" width="2" height="80"/>
          <rect x="1311" y="450" width="2" height="80"/><rect x="1323" y="450" width="2" height="80"/>
        </g>
        <rect x="1030" y="448" width="341" height="2" fill="#afafaf"/>
        <rect x="1154" y="448" width="10" height="2" fill="#cfcfcf"/><rect x="1288" y="448" width="11" height="2" fill="#cfcfcf"/>
        <g fill="#505050">
          <rect x="1152" y="287" width="2" height="243"/><rect x="1164" y="287" width="2" height="243"/>
          <rect x="1286" y="287" width="2" height="243"/><rect x="1299" y="287" width="2" height="243"/>
        </g>
        <rect x="1445" y="287" width="3" height="243" fill="#7e7e7e"/><rect x="1458" y="287" width="2" height="243" fill="#7e7e7e"/>
        <rect x="1584" y="287" width="2" height="243" fill="#b2b2b2"/>
        <path d="M1030 761h19v-15h22v-14h22v-15h21v-15h22v-14h22v-15h21v-15h22v-15h21v-14h22v-15h22v-15h21v-14h22v-15h21v-15h22v-14h19v17L1051 775h-21z" fill="#c0c9d3"/>
        <path d="M1030 761h19v-15h22v-14h22v-15h21v-15h22v-14h22v-15h21v-15h22v-15h21v-14h22v-15h22v-15h21v-14h22v-15h21v-15h22v-14h19" fill="none" stroke="#808080" stroke-width="2"/>
        <path d="M1051 775 1371 558" stroke="#808080" stroke-width="1.600"/>
        <g fill="#a0b2c4">
          <rect x="484" y="286" width="24" height="490"/><rect x="802" y="286" width="24" height="490"/><rect x="1006" y="286" width="24" height="490"/><rect x="1371" y="286" width="24" height="490"/><rect x="1626" y="286" width="25" height="490"/>
        </g>
        <g fill="#191919">
          <rect x="483" y="285" width="1169" height="2"/>
          <rect x="508" y="530" width="294" height="2"/><rect x="826" y="530" width="180" height="2"/><rect x="1030" y="530" width="341" height="2"/><rect x="1395" y="530" width="231" height="2"/>
          <rect x="483" y="775" width="1169" height="2"/>
          <rect x="483" y="285" width="2" height="492"/><rect x="507" y="286" width="2" height="490"/><rect x="801" y="286" width="2" height="490"/><rect x="825" y="286" width="2" height="490"/><rect x="1005" y="286" width="2" height="490"/><rect x="1029" y="286" width="2" height="490"/><rect x="1370" y="286" width="2" height="490"/><rect x="1394" y="286" width="2" height="490"/><rect x="1625" y="286" width="2" height="490"/><rect x="1650" y="285" width="2" height="492"/>
        </g>
        <rect x="321" y="775" width="1599" height="1" fill="#33335a"/>
        <rect x="506" y="777" width="4" height="1" fill="#1aa01a"/><rect x="800" y="777" width="4" height="1" fill="#1aa01a"/>
        <path d="M1876 928h2v18h-2z" fill="#202088"/><path d="M1877 919l4 10h-8z" fill="#202088"/>
        <path d="M1880 947h17v2h-17z" fill="#208020"/><path d="M1907 948l-10-4v8z" fill="#208020"/>
        <path d="M1877 944l4 4.500-4 4.500-4-4.500z" fill="#801c1c"/>
        <g class="axis"><text x="1879.500" y="920">Z</text><text x="1879.500" y="949">X</text><text x="1908.500" y="949">Y</text></g>
      </svg>
      <div class="doctabs">
        <div class="dt"><span>Start page</span><svg width="12" height="12"><use href="#close"/></svg></div>
        <div class="dt on"><svg width="16" height="16" viewBox="0 0 16 16"><path d="M1 1h9v3.500H5V7h3v3H5v4H1z" fill="#e8341c" stroke="#8e1408" stroke-width=".7"/><circle cx="9.500" cy="9.800" r="4.200" fill="#2a56b4" stroke="#12285e" stroke-width="2" stroke-dasharray="2 1.300"/><circle cx="9.500" cy="9.800" r="3.800" fill="#2f62c4"/><circle cx="9.500" cy="9.800" r="1.700" fill="#e8edf8"/></svg><span>Document : 1</span><svg width="12" height="12"><use href="#close"/></svg></div>
      </div>
    </div>
  </main>

  <footer class="status">19.59 x 10.51 m</footer>
</div>
</body>
</html>
```
FILE: styles.css
```css
* { box-sizing: border-box; }
body {
  margin: 0;
  background: #d6d6d6;
  color: #222;
  font: 12px/1 "Noto Sans", "DejaVu Sans", sans-serif;
}
i, em { font-style: normal; }
.defs { position: absolute; }
.app {
  width: 1920px;
  height: 1055px;
  display: flex;
  flex-direction: column;
  overflow: hidden;
  background: #d6d6d6;
}

.titlebar {
  height: 27px;
  display: flex;
  align-items: center;
  justify-content: flex-end;
  padding-right: 11px;
  background: linear-gradient(#e8e8e8, #d7d7d7);
}
.title {
  flex: 1;
  padding: 2px 0 0 76px;
  text-align: center;
  font-weight: 700;
  font-size: 13px;
  color: #555;
}
.menubar {
  height: 26px;
  padding: 0 13px;
  display: flex;
  align-items: center;
  gap: 20px;
  background: #d6d6d6;
}
.menubar u { text-underline-offset: 2px; }

.toolbar {
  height: 40px;
  display: flex;
  align-items: center;
  border-bottom: 1px solid #8e8e8e;
  background: linear-gradient(#d6d6d6, #c3c3c3);
}
.toolbar.second { border-bottom: 1px solid #9a9a9a; padding-top: 1px; }
.ic { width: 24px; height: 24px; margin: 0 6px; flex: none; overflow: visible; }
.grip {
  width: 12px;
  height: 24px;
  flex: none;
  background: radial-gradient(circle at 6px 2px, #8a8a8a 1.200px, transparent 1.400px) 0 0 / 12px 5.500px repeat-y;
}
.toolbar > .grip:first-child { width: 11px; }
.g13 { width: 13px; }
.g14 { width: 14px; }
.g8 { width: 14px; margin-right: 1px; }
.gap { width: 11px; flex: none; }
.sp10 { width: 10px; flex: none; }
.drop { flex: none; display: flex; justify-content: center; }
.dw1 { width: 21px; }
.dw2 { width: 19px; }
.drop::before, .tri {
  content: "";
  width: 0;
  height: 0;
  border: 5px solid transparent;
  border-top-color: #1c1c1c;
  border-bottom: 0;
}
.combo {
  width: 167px;
  height: 28px;
  margin: 0 2px 0 12px;
  padding: 0 4px 0 7px;
  display: flex;
  align-items: center;
  gap: 3px;
  flex: none;
  border: 1px solid #9c9c9c;
  border-radius: 3px;
  background: linear-gradient(#f4f4f4, #d8d8d8);
  box-shadow: 0 1px 1px #0003;
}
.combo span { flex: 1; }
.snaps { display: flex; gap: 2px; }
.snaps b {
  width: 24px;
  height: 24px;
  display: flex;
  border: 1px solid #828282;
  border-radius: 3px;
  background: #b3b3b3;
  box-shadow: inset 0 1px 2px #0003, 0 1px 0 #e0e0e0;
}
.snaps svg { width: 24px; height: 24px; margin: -1px; flex: none; }

.btn {
  height: 23px;
  flex: none;
  display: flex;
  align-items: center;
  justify-content: center;
  gap: 3px;
  border: 1px solid #a0a0a0;
  border-radius: 3px;
  background: linear-gradient(#f6f6f6, #dcdcdc);
  box-shadow: 0 1px 1px #0003;
}
.top { width: 83px; }
.g14 + .top { margin-left: -1px; }
.b19 { width: 19px; }
.m3 { margin-left: 3px; }
.sw { width: 16px; height: 16px; }
.black { background: #000; }
.grey { background: #cacaca; }
.spin {
  height: 21px;
  display: flex;
  flex: none;
  align-items: center;
  border: 1px solid #9c9c9c;
  border-radius: 3px;
  background: #f2f2f2;
}
.s1 { width: 48px; margin-left: 3px; }
.s2 { width: 60px; margin-left: 2px; }
.spin span { flex: 1; padding: 1px 0 0 3px; white-space: nowrap; }
.s2 span { padding-left: 5px; }
.spin em {
  width: 13px;
  height: 19px;
  display: flex;
  flex-direction: column;
  align-items: center;
  justify-content: space-between;
  padding: 4px 0 3px;
  border-left: 1px solid #b0b0b0;
  background: #dcdcdc;
}
em .up, em .dn { width: 0; height: 0; border: 3px solid transparent; }
em .up { border-bottom: 3px solid #1c1c1c; border-top: 0; }
em .dn { border-top: 3px solid #1c1c1c; border-bottom: 0; }
.bigA { font: italic 700 25px/1 "Liberation Serif", serif; fill: #f5cf12; stroke: #4a3a00; stroke-width: 1; }
.dim { font: 700 8px "Liberation Sans", sans-serif; fill: #f4f4f4; stroke: #777; stroke-width: .3; }

.main { height: 891px; flex: none; display: flex; }
.dock { width: 315px; display: flex; flex-direction: column; padding-left: 2px; }
.docktitle {
  height: 25px;
  display: flex;
  justify-content: space-between;
  align-items: center;
  padding-right: 2px;
}
.tabs { height: 30px; display: flex; align-items: flex-end; gap: 2px; padding-top: 1px; }
.tab {
  width: 47px;
  height: 27px;
  padding-bottom: 2px;
  display: flex;
  align-items: center;
  justify-content: center;
  border: 1px solid #9e9e9e;
  border-bottom: 0;
  border-radius: 3px 3px 0 0;
  background: linear-gradient(#e0e0e0, #cfcfcf);
}
.tab.on { width: 49px; height: 30px; padding-bottom: 1px; background: #ededed; border-color: #b0b0b0; }
.frame {
  width: 312px;
  height: 836px;
  flex: none;
  display: flex;
  flex-direction: column;
  border: 1px solid #9a9a9a;
  border-bottom-width: 2px;
  background: #ececec;
}
.frame > * { flex: none; }
.tree {
  height: 335px;
  display: flex;
  background: #f3f3f3;
  border: 1px solid #868686;
  border-width: 1px 1px 1px 0;
}
.treebody { flex: 1; }
.thead { height: 25px; background: #d6d6d6; }
.thead span {
  display: block;
  width: 174px;
  height: 25px;
  padding: 7px 0 0 4px;
  border-right: 1px solid #a0a0a0;
  border-bottom: 1px solid #8e8e8e;
  background: linear-gradient(#fbfbfb, #dedede);
}
.trow { width: 174px; height: 19px; display: flex; align-items: center; padding-left: 30px; }
.trow svg { width: 16px; height: 16px; margin: 0 6px 0 8px; }
.arr {
  width: 5px;
  height: 0;
  border: 5px solid transparent;
  border-left-color: #1c1c1c;
  border-right: 0;
}
.arr.none { border-color: transparent; }
.sel { background: #8fad70; color: #f4f4f4; border: 1px solid #83926f; border-width: 1px 0; }
.sel svg { opacity: .7; }
.dim2 { color: #8c8c8c; }

.sbar { width: 14px; display: flex; flex-direction: column; background: #e4e4e4; }
.sb { height: 14px; display: flex; align-items: center; justify-content: center; background: #d6d6d6; }
.sb::before { content: ""; border: 3.500px solid transparent; }
.sb.up::before { border-bottom: 4px solid #1c1c1c; border-top: 0; }
.sb.dn::before { border-top: 4px solid #1c1c1c; border-bottom: 0; }
.sb.off.up::before { border-bottom-color: #8a8a8a; }
.sb.off.dn::before { border-top-color: #8a8a8a; }
.track { flex: 1; display: flex; padding: 0 2px; border-left: 1px solid #c4c4c4; background: linear-gradient(90deg, #dadada, #efefef); }
.thumb {
  flex: 1;
  border: 1px solid #959595;
  border-radius: 5px;
  background: linear-gradient(90deg, #eee, #d4d4d4);
}
.low { padding-top: 240px; }
.high { padding-bottom: 20px; }

.hsplit { height: 8px; display: flex; gap: 3.500px; align-items: center; justify-content: center; }
.hsplit i { width: 2px; height: 2px; background: #999; }
.props {
  height: 460px;
  margin: 0 2px 0 1px;
  display: flex;
  border: 1px solid #8a8a8a;
  border-bottom-width: 2px;
  overflow: hidden;
}
.pbody { width: 291px; flex: none; height: 457px; overflow: hidden; border-right: 1px solid #a4a4a4; }
.phead { height: 25px; display: flex; border-bottom: 1px solid #8e8e8e; background: linear-gradient(#fbfbfb, #dcdcdc); }
.phead span { padding: 7px 0 0 4px; flex: 1; }
.phead span:first-child { flex: 0 0 100px; border-right: 1px solid #a8a8a8; }
.group { height: 20px; padding: 4px 0 0 23px; font-weight: 700; color: #fff; background: #b1b1b1; }
.prow { height: 20px; display: flex; background: #f3f3f3; }
.odd { background: #e2e2e2; }
.ex { width: 20px; display: flex; align-items: center; justify-content: center; padding-left: 4px; flex: none; }
.l1 { width: 40px; padding-left: 24px; }
.l2 { width: 60px; }
.n, .v { border-bottom: 1px solid #adadad; line-height: 19px; white-space: nowrap; padding-left: 3px; height: 20px; }
.n { flex: 0 0 80px; border-right: 1px solid #adadad; }
.l1 + .n { flex-basis: 60px; }
.l2 + .n { flex-basis: 40px; }
.v { flex: 1; display: flex; justify-content: space-between; }
.v em { width: 8px; display: flex; flex-direction: column; justify-content: space-between; align-items: center; padding: 4px 0 3px; margin-right: 1px; }
.zsel .ex, .zsel .n { background: #8fad70; color: #f4f4f4; }
.zsel .v { padding-left: 4px; }
.narrow { width: 14px; }
.btabs { height: 30px; margin-left: -1px; }
.btabs svg { display: block; }

.vsplit { width: 6px; padding: 433px 0 0 1px; display: flex; flex-direction: column; gap: 3.500px; }
.vsplit i { width: 2px; height: 2px; background: #999; }
.mdi { flex: 1; }
.scene { display: block; }
.axis { font: 9px "Liberation Sans", sans-serif; fill: #000; }
.doctabs { display: flex; padding-left: 1px; border-top: 1px solid #9c9c9c; }
.dt {
  width: 98px;
  height: 28px;
  padding: 3px 10px 0 6px;
  display: flex;
  align-items: center;
  justify-content: space-between;
  border: 1px solid #9c9c9c;
  border-width: 0 2px 2px 1px;
  border-radius: 0 0 3px 3px;
  background: linear-gradient(#cfcfcf, #dedede);
}
.dt.on { width: 139px; height: 31px; margin-left: 1px; padding: 3px 8px 0 5px; background: #ececec; }

.status {
  flex: 1;
  padding: 10px 33px 0 0;
  text-align: right;
  border-bottom: 1px solid #555;
  box-shadow: inset 0 -2px 0 #999;
}
```
